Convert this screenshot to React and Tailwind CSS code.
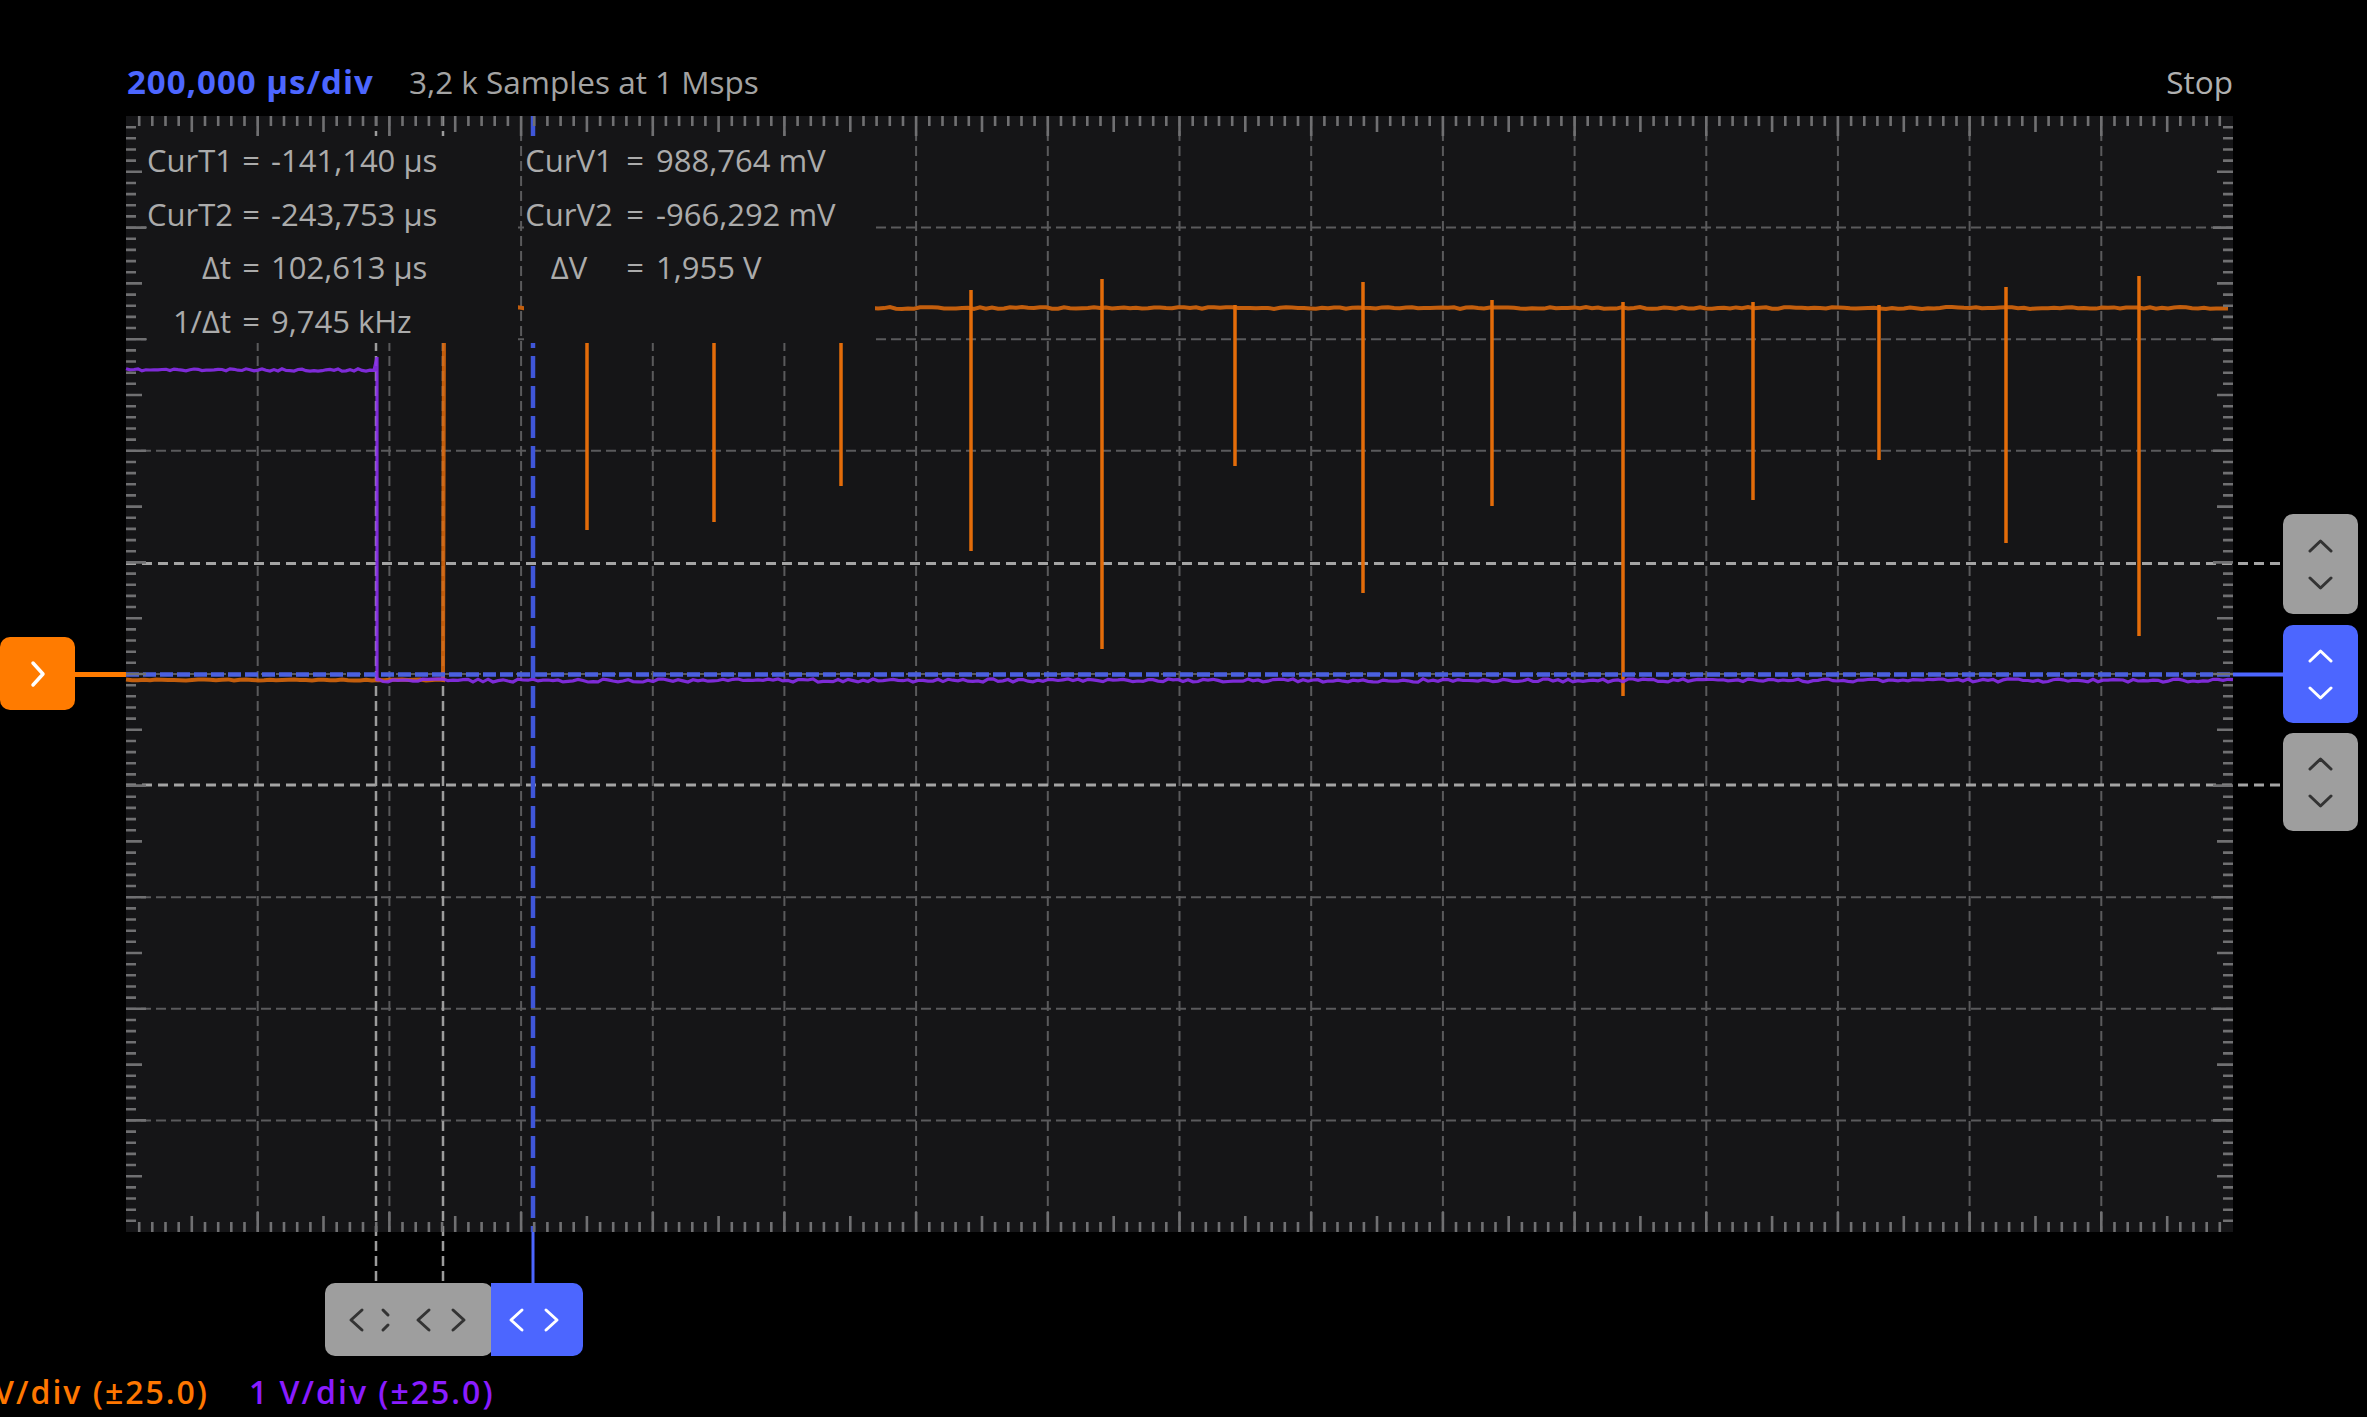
import React from "react";

const W = 2107;
const H = 1116;
const DX = W / 16;
const DY = H / 10;

function makeRng(seed) {
  let s = seed;
  return () => {
    s = (s * 16807) % 2147483647;
    return s / 2147483647;
  };
}

function noisy(x0, x1, y, step, amp, seed) {
  const r = makeRng(seed);
  const pts = [];
  for (let x = x0; x <= x1; x += step) {
    pts.push(`${x.toFixed(1)} ${(y + (r() - 0.5) * 2 * amp).toFixed(1)}`);
  }
  return pts;
}

const purplePath =
  "M" +
  noisy(0, 250, 254, 4, 1.2, 11).join(" L") +
  " L251 241 L251 565 L" +
  noisy(252, 2107, 564.5, 5, 1.6, 29).join(" L");

const orangePath =
  "M" +
  noisy(0, 316, 564, 6, 0.6, 5).join(" L") +
  " L317 564 L318 192 L" +
  noisy(320, 2107, 192, 6, 0.9, 17).join(" L");

const spikes = [
  [587, 300, 530],
  [714, 300, 522],
  [841, 300, 486],
  [971, 290, 551],
  [1102, 279, 649],
  [1235, 305, 466],
  [1363, 282, 593],
  [1492, 300, 506],
  [1623, 302, 696],
  [1753, 302, 500],
  [1879, 305, 460],
  [2006, 287, 543],
  [2139, 276, 636],
].map(([x, t, b]) => [x - 126, t - 116, b - 116]);

function tickPath() {
  let d = "";
  const len = (k) => (k % 10 === 0 ? 20 : k % 5 === 0 ? 16 : 10);
  for (let k = 1; k < 160; k++) {
    const x = ((k * DX) / 10).toFixed(1);
    d += `M${x} 0V${len(k)}M${x} ${H}V${H - len(k)}`;
  }
  for (let k = 1; k < 100; k++) {
    const y = ((k * DY) / 10).toFixed(1);
    d += `M0 ${y}H${len(k)}M${W} ${y}H${W - len(k)}`;
  }
  return d;
}
const TICKS = tickPath();

function gridPath() {
  let d = "";
  for (let i = 1; i < 16; i++) {
    const x = (i * DX).toFixed(1);
    d += `M${x} 0V${H}`;
  }
  for (let j = 1; j < 10; j++) {
    if (j === 4 || j === 6) continue;
    const y = (j * DY).toFixed(1);
    d += `M0 ${y}H${W}`;
  }
  return d;
}
const GRID = gridPath();

function Scope() {
  return (
    <svg
      className="absolute left-0 top-0 overflow-visible"
      width={W}
      height={H}
      viewBox={`0 0 ${W} ${H}`}
    >
      <path d={GRID} stroke="#5a5a5c" strokeWidth="2" strokeDasharray="10 5" fill="none" />
      {/* horizontal cursors */}
      <line x1="0" x2="2157" y1="447.5" y2="447.5" stroke="#a4a4a4" strokeWidth="3" strokeDasharray="10 6" />
      <line x1="0" x2="2157" y1="669" y2="669" stroke="#a4a4a4" strokeWidth="3" strokeDasharray="10 6" />
      {/* vertical cursors */}
      <line x1="250" x2="250" y1="0" y2="1167" stroke="#9c9c9c" strokeWidth="2.5" strokeDasharray="10 5" />
      <line x1="317" x2="317" y1="0" y2="1167" stroke="#9c9c9c" strokeWidth="2.5" strokeDasharray="10 5" />
      {/* orange trace */}
      <path d={orangePath} stroke="#d6660c" strokeWidth="4" fill="none" strokeOpacity="0.9" />
      {spikes.map(([x, t, b], i) => (
        <line key={i} x1={x} x2={x} y1={t} y2={b} stroke="#e36c0a" strokeWidth="3.5" />
      ))}
      {/* blue reference dashed */}
      <line x1="0" x2={W} y1="558.5" y2="558.5" stroke="#4a60e0" strokeWidth="4.5" strokeDasharray="13 4" />
      {/* purple trace */}
      <path d={purplePath} stroke="#8a2eec" strokeWidth="3.2" fill="none" strokeOpacity="0.9" />
      {/* blue time cursor */}
      <line x1="407" x2="407" y1="0" y2={H} stroke="#3f56d8" strokeWidth="4.5" strokeDasharray="22 8" />
      <line x1="407" x2="407" y1={H} y2="1167" stroke="#4c66ff" strokeWidth="3" />
      {/* connectors */}
      <line x1="-51" x2="0" y1="558.5" y2="558.5" stroke="#ff7b00" strokeWidth="5" />
      <line x1={W} x2="2158" y1="558.5" y2="558.5" stroke="#4c66ff" strokeWidth="4" />
      {/* ruler ticks */}
      <path d={TICKS} stroke="#707072" strokeWidth="2.6" fill="none" />
    </svg>
  );
}

function UpDown({ color }) {
  return (
    <div className="flex flex-col items-center gap-[23px]">
      <svg width="25" height="14" viewBox="0 0 25 14">
        <polyline points="2,12 12.5,2 23,12" fill="none" stroke={color} strokeWidth="3" strokeLinecap="round" strokeLinejoin="round" />
      </svg>
      <svg width="25" height="14" viewBox="0 0 25 14">
        <polyline points="2,2 12.5,12 23,2" fill="none" stroke={color} strokeWidth="3" strokeLinecap="round" strokeLinejoin="round" />
      </svg>
    </div>
  );
}

const leftRows = [
  ["CurT1", "-141,140 µs"],
  ["CurT2", "-243,753 µs"],
  ["Δt", "102,613 µs"],
  ["1/Δt", "9,745 kHz"],
];
const rightRows = [
  ["CurV1", "988,764 mV"],
  ["CurV2", "-966,292 mV"],
  ["ΔV", "1,955 V"],
];

export default function App() {
  return (
    <div className="relative h-[1417px] w-[2367px] overflow-hidden bg-black font-['Open_Sans',sans-serif]">
      <header className="flex h-[116px] items-end justify-between pb-[14px] pl-[127px] pr-[134px] leading-[40px] whitespace-nowrap">
        <div className="flex items-end">
          <div className="flex w-[282px] items-end">
            <span className="text-[33px] font-bold leading-[40px] tracking-[1px] text-[#4c66ff]">200,000 µs/div</span>
          </div>
          <span className="text-[31.5px] leading-[40px] text-[#a3a3a3]">3,2 k Samples at 1 Msps</span>
        </div>
        <span className="text-[31.5px] leading-[40px] text-[#b0b0b0]">Stop</span>
      </header>

      <div className="flex h-[1116px]">
        <div className="relative w-[126px] shrink-0">
          <div className="absolute left-0 top-[521px] flex h-[73px] w-[75px] items-center justify-center rounded-[10px] bg-[#ff7b00]">
            <svg width="16" height="28" viewBox="0 0 16 28">
              <polyline points="3,3 13,14 3,25" fill="none" stroke="#ffffff" strokeWidth="3.5" strokeLinecap="round" strokeLinejoin="round" />
            </svg>
          </div>
        </div>

        <div className="relative w-[2107px] shrink-0 bg-[#151517]">
          <Scope />
          <div className="absolute left-[21px] top-[20px] h-[207px] w-[371px] bg-[#151517]">
            <div className="mt-[-2px] grid grid-cols-[84px_40px_auto] text-[31px] leading-[53.5px] text-[#ababab] whitespace-nowrap">
              {leftRows.map(([l, v]) => (
                <React.Fragment key={l}>
                  <span className="text-right">{l}</span>
                  <span className="text-center">=</span>
                  <span>{v}</span>
                </React.Fragment>
              ))}
            </div>
          </div>
          <div className="absolute left-[398px] top-[20px] h-[207px] w-[351px] bg-[#151517]">
            <div className="mt-[-2px] grid grid-cols-[90px_42px_auto] text-[31px] leading-[53.5px] text-[#ababab] whitespace-nowrap">
              {rightRows.map(([l, v]) => (
                <React.Fragment key={l}>
                  <span className="text-center">{l}</span>
                  <span className="text-center">=</span>
                  <span>{v}</span>
                </React.Fragment>
              ))}
            </div>
          </div>
        </div>

        <div className="relative flex-1">
          <div className="absolute left-[50px] top-[398px] flex h-[100px] w-[75px] items-center justify-center rounded-[10px] bg-[#9e9e9e]">
            <UpDown color="#333333" />
          </div>
          <div className="absolute left-[50px] top-[509px] flex h-[98px] w-[75px] items-center justify-center rounded-[10px] bg-[#4c66ff]">
            <UpDown color="#ffffff" />
          </div>
          <div className="absolute left-[50px] top-[617px] flex h-[98px] w-[75px] items-center justify-center rounded-[10px] bg-[#9e9e9e]">
            <UpDown color="#333333" />
          </div>
        </div>
      </div>

      <div className="relative h-[124px]">
        <div className="absolute left-[325px] top-[51px] h-[73px] w-[168px] rounded-[10px] bg-[#9e9e9e]">
          <svg width="168" height="73" viewBox="0 0 168 73">
            <g fill="none" stroke="#333333" strokeWidth="3" strokeLinecap="round" strokeLinejoin="round">
              <polyline points="37,27 26,37 37,47" />
              <path d="M58 27 L63 32 M63 42 L58 47" />
              <polyline points="104,27 93,37 104,47" />
              <polyline points="128,27 139,37 128,47" />
            </g>
          </svg>
        </div>
        <div className="absolute left-[491px] top-[51px] h-[73px] w-[92px] rounded-r-[10px] bg-[#4c66ff]">
          <svg width="92" height="73" viewBox="0 0 92 73">
            <g fill="none" stroke="#ffffff" strokeWidth="3" strokeLinecap="round" strokeLinejoin="round">
              <polyline points="31,27 20,37 31,47" />
              <polyline points="55,27 66,37 55,47" />
            </g>
          </svg>
        </div>
      </div>

      <div className="flex pt-[16px] text-[32px] font-semibold leading-[40px] whitespace-nowrap">
        <div className="flex w-[209px] justify-end">
          <span className="tracking-[2px] text-[#ff7700]">1 V/div (±25.0)</span>
        </div>
        <span className="ml-[40px] tracking-[2px] text-[#8a1cff]">1 V/div (±25.0)</span>
      </div>
    </div>
  );
}
